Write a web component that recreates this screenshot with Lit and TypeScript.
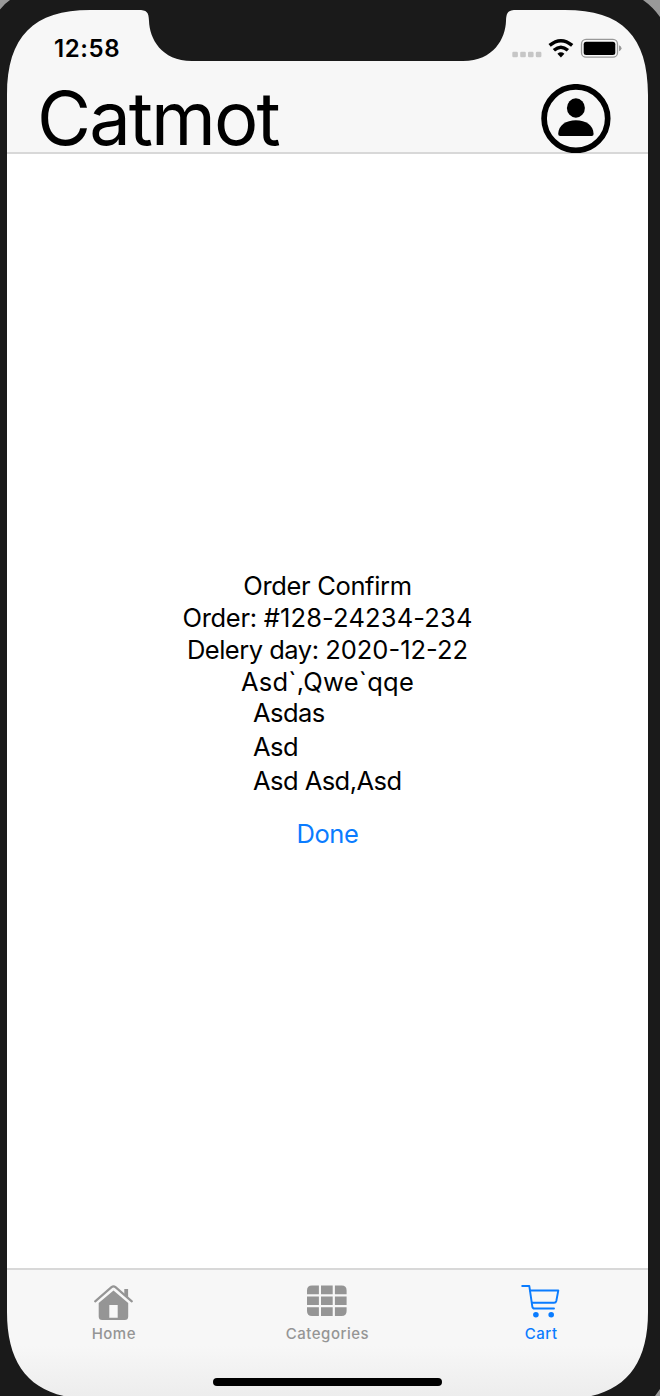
import { LitElement, html, css, svg } from "lit";
import { customElement } from "lit/decorators.js";

const SCREEN =
  "M7 95C7 36 34 10 90 10H138C147 10 148.7 12 149 21C149.5 38 161 61 192 61H463C494 61 505.5 38 506 21C506.3 12 508 10 517 10H565C622 10 648 36 648 95V1312C648 1370 620 1399 562 1399H93C35 1399 7 1370 7 1312Z";

const homeIcon = svg`<svg class="icon" width="40" height="36" viewBox="93.500 1285 40 36">
  <path d="M123.800 1289h3.800v9.500l-3.800-3.500z" fill="currentColor"/>
  <path d="M94.700 1301.300L111 1287.200q2-1.600 4 0l16.300 14.100" fill="none" stroke="currentColor" stroke-width="2.200" stroke-linecap="round"/>
  <path fill-rule="evenodd" fill="currentColor" d="M98.200 1303L113 1290.500L127.700 1303V1316.500q0 3.500-3.500 3.500H101.700q-3.500 0-3.500-3.500ZM108.800 1305V1317.800H117.200V1305Z"/>
</svg>`;

const gridIcon = svg`<svg class="icon" width="40" height="36" viewBox="307 1285 40 36">
  <path fill="currentColor" d="M312 1285.500H318.900V1294.200H307V1290.500Q307 1285.500 312 1285.500ZM321 1285.500H332.700V1294.200H321ZM334.900 1285.500H341.600Q346.600 1285.500 346.600 1290.500V1294.200H334.900ZM307 1296.500H318.900V1305H307ZM321 1296.500H332.700V1305H321ZM334.900 1296.500H346.600V1305H334.900ZM307 1307.300H318.900V1316H312Q307 1316 307 1311ZM321 1307.300H332.700V1316H321ZM334.900 1307.300H346.600V1311Q346.600 1316 341.600 1316H334.900Z"/>
</svg>`;

const cartIcon = svg`<svg class="icon" width="40" height="36" viewBox="521 1285 40 36">
  <g fill="none" stroke="currentColor" stroke-width="1.900" stroke-linecap="round" stroke-linejoin="round">
    <path d="M522.200 1286H529.300L532.300 1306.500Q532.600 1308.500 534.500 1308.500H554"/>
    <path d="M530 1290.500H558.300L556.300 1301Q555.900 1302.800 554 1302.800H532"/>
  </g>
  <circle cx="535.900" cy="1314.700" r="2.800" fill="currentColor"/>
  <circle cx="551.200" cy="1314.700" r="2.800" fill="currentColor"/>
</svg>`;

@customElement("app-root")
export class AppRoot extends LitElement {
  static styles = css`
    :host { display: block; font-family: Inter, sans-serif; color: #000; }
    .device { position: relative; box-sizing: border-box; width: 660px; height: 1396px; padding: 10px 12px 0 7px; overflow: hidden; background: #1a1a1a; }
    .screen { display: flex; flex-direction: column; height: 1386px; background: #fff; }
    .bezel { position: absolute; inset: 0; pointer-events: none; }
    header { box-sizing: border-box; height: 144px; background: #f7f7f7; border-bottom: 2px solid #d8d8d8; }
    .status { display: flex; justify-content: space-between; height: 74px; }
    .time { margin: 24px 0 0 47px; font-size: 24px; line-height: 30px; font-weight: 600; letter-spacing: 0.600px; }
    .signals { margin: 24px 22px 0 0; }
    .title { display: flex; justify-content: space-between; padding: 0 37px 0 30px; }
    h1 { margin: -2px 0 0; font-size: 74px; line-height: 72px; font-weight: 400; letter-spacing: -1.900px; }
    .icon, .avatar, .signals { display: block; flex: none; }
    main { flex: 1; display: flex; flex-direction: column; align-items: center; padding-top: 416.300px; font-size: 25.500px; line-height: 32px; white-space: nowrap; }
    .line { height: 31.800px; }
    .heading { letter-spacing: -0.350px; }
    .order-label { letter-spacing: -0.300px; }
    .order-value { letter-spacing: 0.150px; }
    .day-label { letter-spacing: -0.500px; }
    .name { letter-spacing: 0.250px; }
    .address { box-sizing: border-box; width: 149px; margin-top: -1px; line-height: 34px; letter-spacing: -0.550px; }
    .row { height: 34px; }
    button { margin: 20px 0 0; padding: 0; border: 0; background: none; font: inherit; letter-spacing: -0.350px; color: #0a7cff; }
    nav { box-sizing: border-box; height: 128px; border-top: 2px solid #d8d8d8; background: linear-gradient(#f7f7f7 60%, #ededed); display: flex; flex-direction: column; align-items: center; justify-content: space-between; }
    .tabs { display: grid; grid-template-columns: repeat(3, 1fr); width: 100%; padding-top: 15px; }
    .tab { display: flex; flex-direction: column; align-items: center; color: #959595; font-size: 15px; line-height: 20px; font-weight: 500; letter-spacing: 0.500px; gap: 3px; }
    .active { color: #0a7cff; }
    .indicator { width: 229px; height: 8px; margin-bottom: 10px; border-radius: 4px; background: #000; }
  `;

  render() {
    return html`<div class="device">
      <div class="screen">
        <header>
          <div class="status">
            <div class="time">12:58</div>
            <svg class="signals" width="114" height="30" viewBox="512 34 114 30">
              <g fill="#c6c6c6"><rect x="512.300" y="51.800" width="5.600" height="5.400" rx="1.300"/><rect x="520.200" y="51.800" width="5.600" height="5.400" rx="1.300"/><rect x="528" y="51.800" width="5.600" height="5.400" rx="1.300"/><rect x="535.800" y="51.800" width="5.600" height="5.400" rx="1.300"/></g>
              <g fill="none" stroke="#000" stroke-width="3.500"><path d="M549.600 45.400Q560.900 36 572.200 45.400"/><path d="M553.900 50.300Q560.900 44.200 567.900 50.300"/></g>
              <path d="M557.400 53.700Q560.900 50.800 564.400 53.700L560.900 57.400Z"/>
              <rect x="581.500" y="39.400" width="36" height="17.800" rx="4.500" fill="none" stroke="#999" stroke-width="1.300"/>
              <rect x="583.700" y="41.700" width="31.600" height="13.300" rx="2.500"/>
              <path d="M619 45.300Q621.500 46.200 621.500 48.300T619 51.300Z" fill="#999"/>
            </svg>
          </div>
          <div class="title">
            <h1>Catmot</h1>
            <svg class="avatar" width="70" height="69" viewBox="541 84 70 69">
              <circle cx="575.900" cy="118.600" r="31.800" fill="none" stroke="#000" stroke-width="5.700"/>
              <ellipse cx="575.900" cy="108" rx="9" ry="9.700"/>
              <path d="M558.200 134C558.500 125 566 120.200 575.900 120.200S593.300 125 593.600 134Q593.600 136 591.600 136H560.200Q558.200 136 558.200 134Z"/>
            </svg>
          </div>
        </header>
        <main>
          <div class="line heading">Order Confirm</div>
          <div class="line"><span class="order-label">Order: </span><span class="order-value">#128-24234-234</span></div>
          <div class="line"><span class="day-label">Delery day: </span><span>2020-12-22</span></div>
          <div class="line name">Asd\`,Qwe\`qqe</div>
          <div class="address">
            <div class="row">Asdas</div>
            <div class="row">Asd</div>
            <div class="row">Asd Asd,Asd</div>
          </div>
          <button>Done</button>
        </main>
        <nav>
          <div class="tabs">
            <div class="tab">${homeIcon}<span>Home</span></div>
            <div class="tab">${gridIcon}<span>Categories</span></div>
            <div class="tab active">${cartIcon}<span>Cart</span></div>
          </div>
          <div class="indicator"></div>
        </nav>
      </div>
      <svg class="bezel" width="660" height="1396" viewBox="0 0 660 1396">
        <path fill="#1a1a1a" fill-rule="evenodd" d="M0 0H660V1396H0Z${SCREEN}"/>
        <path fill="#999" d="M0 0H10Q4 4 0 9.500ZM643 0H660V17Q653 7 643 0ZM660 1389V1396H655Z"/>
      </svg>
    </div>`;
  }
}
